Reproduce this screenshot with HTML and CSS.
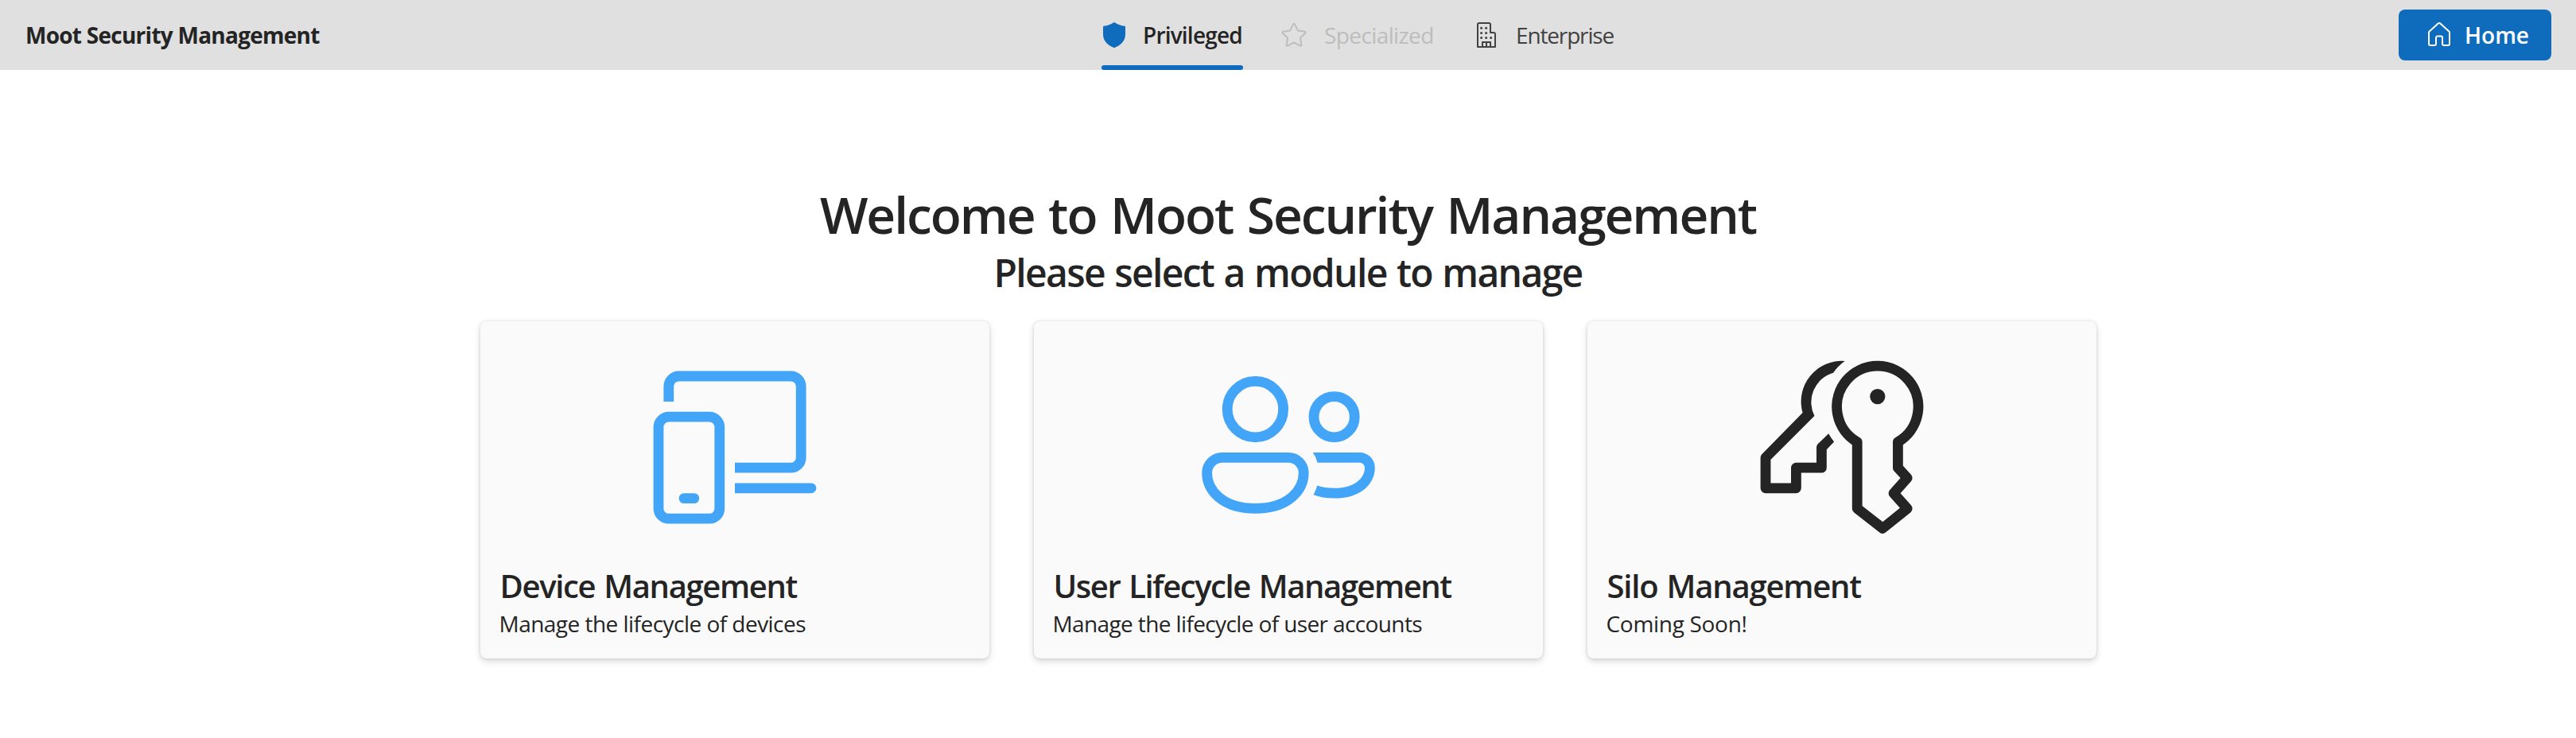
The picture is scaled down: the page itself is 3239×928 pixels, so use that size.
FILE: index.html
```html
<!DOCTYPE html>
<html lang="en">
<head>
<meta charset="utf-8">
<title>Moot Security Management</title>
<link rel="stylesheet" href="styles.css">
</head>
<body>
<header class="topbar">
  <div class="brand"><span class="brand-text">Moot Security Management</span></div>
  <nav class="tabs">
    <a class="tab tab-privileged tab-active">
      <svg class="icon" viewBox="0 0 20 20"><path fill="currentColor" d="M9.72 2.08a.5.5 0 0 1 .56 0c1.93 1.3 3.98 2.04 6.26 2.3.26.03.46.25.46.51V9.5c0 3.9-2.3 6.73-6.82 8.47a.5.5 0 0 1-.36 0C5.3 16.23 3 13.4 3 9.5V4.9c0-.26.2-.48.46-.51 2.28-.27 4.33-1 6.26-2.31Z"/></svg>
      <span>Privileged</span>
    </a>
    <a class="tab tab-specialized tab-disabled">
      <svg class="icon" viewBox="0 0 20 20"><path fill="none" stroke="currentColor" stroke-linejoin="round" d="M9.55 3.18a.5.5 0 0 1 .9 0l1.98 4.03 4.45.64a.5.5 0 0 1 .28.86l-3.22 3.13.76 4.43a.5.5 0 0 1-.73.53L10 14.7l-3.97 2.1a.5.5 0 0 1-.73-.53l.76-4.43L2.84 8.71a.5.5 0 0 1 .28-.86l4.45-.64z"/></svg>
      <span>Specialized</span>
    </a>
    <a class="tab tab-enterprise">
      <svg class="icon" viewBox="0 0 20 20"><path fill="none" stroke="currentColor" stroke-linejoin="round" d="M5.5 2.5h6a1 1 0 0 1 1 1V8.500h2a1 1 0 0 1 1 1V17.500h-11V3.500a1 1 0 0 1 1-1ZM7.500 17.500v-3h5v3M10 14.500v3"/><g fill="currentColor"><circle cx="6.8" cy="5.650" r=".75"/><circle cx="9.8" cy="5.650" r=".75"/><circle cx="6.8" cy="8.700" r=".75"/><circle cx="9.8" cy="8.700" r=".75"/><circle cx="6.8" cy="11.750" r=".75"/><circle cx="9.8" cy="11.750" r=".75"/><circle cx="12.8" cy="11.750" r=".75"/></g></svg>
      <span>Enterprise</span>
    </a>
  </nav>
  <div class="actions">
    <button class="home" type="button">
      <svg class="icon" viewBox="0 0 20 20"><path fill="none" stroke="currentColor" stroke-linejoin="round" d="M9.330 2.770a1 1 0 0 1 1.340 0l5.500 4.940a1 1 0 0 1 .33.75V15.500a1 1 0 0 1-1 1H13a1 1 0 0 1-1-1V11.700a.9.9 0 0 0-.9-.9H8.900a.9.9 0 0 0-.9.9V15.500a1 1 0 0 1-1 1H4.500a1 1 0 0 1-1-1V8.460a1 1 0 0 1 .33-.75Z"/></svg>
      <span>Home</span>
    </button>
  </div>
</header>
<main class="main">
  <h1 class="title">Welcome to Moot Security Management</h1>
  <h2 class="subtitle">Please select a module to manage</h2>
  <div class="cards">
    <section class="card card-device">
      <svg class="art art-blue" viewBox="0 0 20 20"><g fill="none" stroke="currentColor"><path d="M3.500 5V3.500a1 1 0 0 1 1-1h11a1 1 0 0 1 1 1v7a1 1 0 0 1-1 1H10"/><rect x="2.500" y="6.500" width="6" height="10" rx="1"/></g><path fill="currentColor" d="M10 13h7.500a.5.5 0 0 1 0 1H10zM5 14h1a.5.5 0 0 1 0 1H5a.5.5 0 0 1 0-1Z"/></svg>
      <h3 class="card-title">Device Management</h3>
      <p class="card-text">Manage the lifecycle of devices</p>
    </section>
    <section class="card card-user">
      <svg class="art art-blue" viewBox="0 0 20 20"><g fill="none" stroke="currentColor"><circle cx="6.750" cy="5.750" r="2.750"/><circle cx="14.500" cy="6.500" r="2"/><path d="M3.500 10.500H10A1.500 1.500 0 0 1 11.500 12C11.500 13.700 10 15.500 6.750 15.500S2 13.700 2 12A1.500 1.500 0 0 1 3.500 10.500Z"/></g><path fill="currentColor" d="M12.400 10H17A1.500 1.500 0 0 1 18.500 11.500C18.500 12.900 17.350 14.500 14.500 14.500C13.700 14.500 13.050 14.380 12.470 14.160Q12.700 13.730 12.830 13.250Q13.550 13.500 14.500 13.500C16.650 13.500 17.500 12.400 17.500 11.500A.5.5 0 0 0 17 11H12.850Q12.730 10.450 12.400 10Z"/></svg>
      <h3 class="card-title">User Lifecycle Management</h3>
      <p class="card-text">Manage the lifecycle of user accounts</p>
    </section>
    <section class="card card-silo">
      <svg class="art" viewBox="0 0 20 20"><path fill="none" stroke="currentColor" stroke-linejoin="round" d="M11.500 8.960A4 4 0 1 1 15.500 8.960V11.500L16.420 12.500L15.080 14L16.420 15.500L14 17.450L11.500 15.500Z"/><circle cx="13.500" cy="4.500" r=".75" fill="currentColor"/><path fill="currentColor" d="M10.280 1.010A4 4 0 0 0 6.140 6.100L2.150 10.150A.5.5 0 0 0 2 10.500V13.500A.5.5 0 0 0 2.500 14H5.500A.5.5 0 0 0 6 13.500V12H8A.5.5 0 0 0 8.500 11.500V9.700L9.230 8.950Q8.900 8.550 8.690 8.140L7.650 9.150A.5.5 0 0 0 7.500 9.500V11H5.500A.5.5 0 0 0 5 11.500V13H3V10.700L7.300 6.400A3 3 0 0 1 9.150 2.170Q9.600 1.500 10.280 1.010Z"/></svg>
      <h3 class="card-title">Silo Management</h3>
      <p class="card-text">Coming Soon!</p>
    </section>
  </div>
</main>
</body>
</html>
```
FILE: styles.css
```css
* { box-sizing: border-box; }
body {
  margin: 0;
  min-height: 928px;
  background: #fff;
  color: #242424;
  font-family: "Open Sans", "Noto Sans", sans-serif;
  font-size: 28px;
  line-height: 40px;
}
h1, h2, h3, p { margin: 0; white-space: nowrap; }
.topbar {
  height: 88px;
  background: #e0e0e0;
  display: flex;
  justify-content: space-between;
  white-space: nowrap;
}
.brand { width: 1381px; padding: 24px 0 0 32px; font-weight: 700; }
.brand-text { letter-spacing: -.74px; }
.tabs { display: flex; flex: 1; gap: 44px; color: #424242; }
.tab { display: flex; align-items: center; gap: 16px; position: relative; height: 88px; }
.tab-privileged { width: 182px; font-weight: 600; letter-spacing: -.8px; }
.tab-specialized { width: 198px; gap: 18px; letter-spacing: -.6px; }
.tab-enterprise { gap: 17px; letter-spacing: -1.15px; }
.icon { width: 40px; height: 40px; flex: none; display: block; }
.tab-active { color: #242424; }
.tab-active .icon { color: #0f6cbd; }
.tab-active::after {
  content: "";
  position: absolute;
  left: 4px;
  right: 0;
  bottom: 0;
  height: 6px;
  border-radius: 4px;
  background: #0f6cbd;
}
.tab-disabled { color: #bdbdbd; }
.actions { padding: 12px 31px 0 0; }
.home {
  width: 192px;
  height: 64px;
  border: 0;
  border-radius: 8px;
  padding: 0 0 0 31px;
  display: flex;
  align-items: center;
  gap: 12px;
  background: #0f6cbd;
  color: #fff;
  font: 600 28px/40px "Open Sans", "Noto Sans", sans-serif;
}
.main { padding-top: 140px; display: flex; flex-direction: column; align-items: center; }
.title { font-size: 64px; line-height: 84px; font-weight: 600; letter-spacing: -2.05px; word-spacing: 3px; }
.subtitle { margin-top: -1px; font-size: 48px; line-height: 64px; font-weight: 600; letter-spacing: -1.65px; word-spacing: 1.5px; }
.cards { display: flex; gap: 56px; margin-top: 29px; }
.card {
  width: 640px;
  height: 424px;
  padding: 37px 24px 0;
  border-radius: 8px;
  background: #fafafa;
  box-shadow: 0 0 4px rgba(0, 0, 0, .12), 0 4px 8px rgba(0, 0, 0, .14);
}
.art { display: block; width: 256px; height: 256px; margin: 0 auto 12px; }
.art-blue { color: #42a5f7; }
.card-title { padding-left: 1px; font-size: 40px; line-height: 56px; font-weight: 600; word-spacing: 2px; }
.card-text { line-height: 38px; }
.card-device .card-title { letter-spacing: -1.35px; }
.card-user .card-title { letter-spacing: -1.45px; }
.card-silo .card-title { letter-spacing: -1.2px; }
.card-device .card-text { letter-spacing: -.53px; }
.card-user .card-text { letter-spacing: -.62px; }
.card-silo .card-text { letter-spacing: -.3px; }
```
